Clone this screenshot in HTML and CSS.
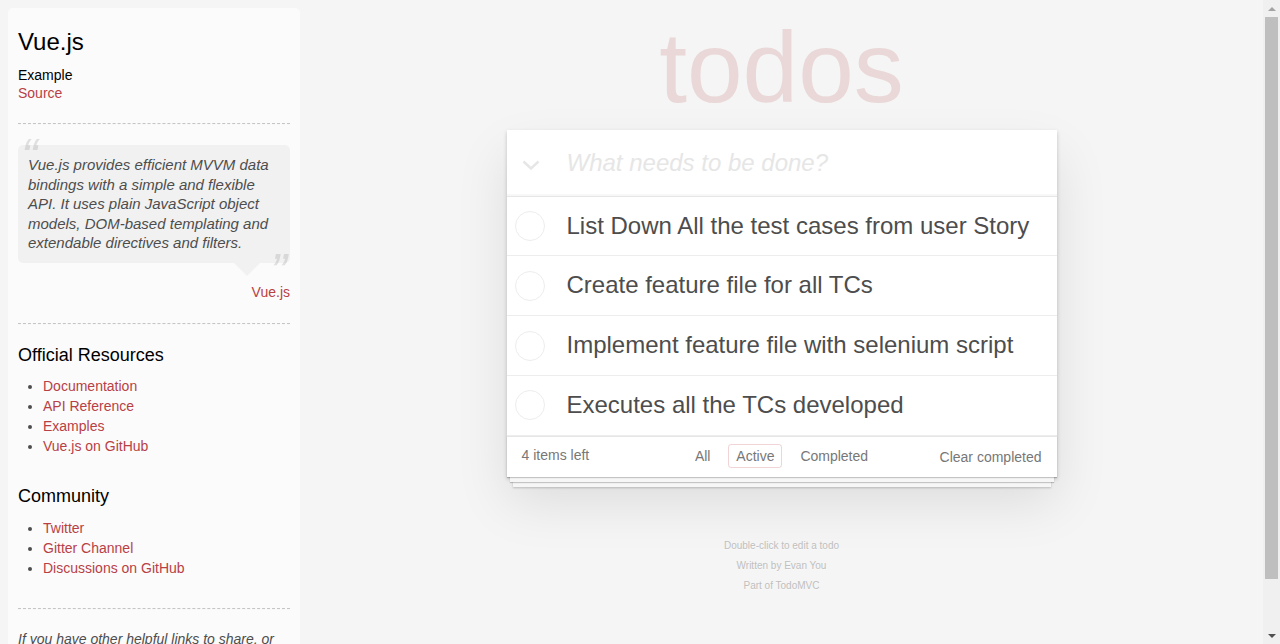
FILE: index.html
```html
<!DOCTYPE html>
<html lang="en">
<head>
<meta charset="utf-8">
<title>Vue.js • TodoMVC</title>
<link rel="stylesheet" href="styles.css">
</head>
<body>
<div class="page">
  <aside class="learn">
    <header class="learn-head">
      <h3>Vue.js</h3>
      <h5>Example</h5>
      <a href="#">Source</a>
    </header>
    <hr>
    <blockquote class="quote">
      <p>Vue.js provides efficient MVVM data bindings with a simple and flexible API. It uses plain JavaScript object models, DOM-based templating and extendable directives and filters.</p>
      <footer class="quote-by"><a href="#">Vue.js</a></footer>
    </blockquote>
    <hr>
    <h4>Official Resources</h4>
    <ul>
      <li><a href="#">Documentation</a></li>
      <li><a href="#">API Reference</a></li>
      <li><a href="#">Examples</a></li>
      <li><a href="#">Vue.js on GitHub</a></li>
    </ul>
    <h4>Community</h4>
    <ul>
      <li><a href="#">Twitter</a></li>
      <li><a href="#">Gitter Channel</a></li>
      <li><a href="#">Discussions on GitHub</a></li>
    </ul>
    <footer class="learn-foot">
      <hr>
      <em>If you have other helpful links to share, or find any of the links above no longer work, please <a href="#">let us know</a>.</em>
    </footer>
  </aside>

  <main class="main-col">
    <h1 class="brand">todos</h1>
    <section class="todoapp">
      <header class="entry">
        <span class="toggle-all">
          <svg width="18" height="10" viewBox="0 0 18 10"><polyline points="1.5,1.5 9,8.5 16.5,1.5" fill="none" stroke="#e6e6e6" stroke-width="2.4"/></svg>
        </span>
        <input class="new-todo" placeholder="What needs to be done?">
      </header>
      <ul class="todo-list">
        <li class="todo"><span class="toggle"><span class="circle"></span></span><label>List Down All the test cases from user Story</label></li>
        <li class="todo"><span class="toggle"><span class="circle"></span></span><label>Create feature file for all TCs</label></li>
        <li class="todo"><span class="toggle"><span class="circle"></span></span><label>Implement feature file with selenium script</label></li>
        <li class="todo"><span class="toggle"><span class="circle"></span></span><label>Executes all the TCs developed</label></li>
      </ul>
      <footer class="app-footer">
        <span class="todo-count"><strong>4</strong> items left</span>
        <ul class="filters">
          <li><a href="#">All</a></li>
          <li><a href="#" class="selected">Active</a></li>
          <li><a href="#">Completed</a></li>
        </ul>
        <span class="clear-completed">Clear completed</span>
      </footer>
    </section>
    <footer class="info">
      <p>Double-click to edit a todo</p>
      <p>Written by <a href="#">Evan You</a></p>
      <p>Part of <a href="#">TodoMVC</a></p>
    </footer>
  </main>
</div>
<div class="scrollbar" aria-hidden="true">
  <div class="sb-btn"><span class="arrow-up"></span></div>
  <div class="sb-thumb"></div>
  <div class="sb-rest"></div>
  <div class="sb-btn"><span class="arrow-down"></span></div>
</div>
</body>
</html>
```

FILE: styles.css
```css
html {
  scrollbar-width: none;
}

html, body {
  margin: 0;
  padding: 0;
}

body {
  display: flex;
  align-items: flex-start;
  background: #f5f5f5;
  color: #4d4d4d;
  font-family: "Liberation Sans", Arial, Helvetica, sans-serif;
  font-size: 14px;
  line-height: 19.6px;
  font-weight: 400;
}

.page {
  flex: 1;
  min-width: 0;
  display: flex;
  align-items: flex-start;
}

/* ---------- window scrollbar ---------- */
.scrollbar {
  flex: none;
  width: 17px;
  height: 100vh;
  position: sticky;
  top: 0;
  display: flex;
  flex-direction: column;
  background: #f0f0f0;
}
.sb-btn {
  flex: none;
  height: 17px;
  display: flex;
  align-items: center;
  justify-content: center;
}
.arrow-up {
  width: 0;
  height: 0;
  border-left: 4px solid transparent;
  border-right: 4px solid transparent;
  border-bottom: 4px solid #a3a3a3;
}
.arrow-down {
  width: 0;
  height: 0;
  border-left: 4px solid transparent;
  border-right: 4px solid transparent;
  border-top: 4px solid #505050;
}
.sb-thumb {
  flex: none;
  height: 562px;
  margin: 0 2px;
  background: #bfbfbf;
}
.sb-rest {
  flex: 1;
}

/* ---------- sidebar ---------- */
.learn {
  flex: none;
  width: 272px;
  margin: 8px 0 0 8px;
  padding: 10px;
  border-radius: 5px;
  background: rgba(255, 255, 255, 0.6);
}

.learn a {
  color: #b83f45;
  text-decoration: none;
  font-weight: normal;
}

.learn h3,
.learn h4,
.learn h5 {
  margin: 10px 0;
  font-weight: 500;
  line-height: 1.2;
  color: #000;
}
.learn h3 { font-size: 24px; }
.learn h4 { font-size: 18px; }
.learn h5 { font-size: 14px; margin-bottom: 0; }

.learn hr {
  margin: 20px 0;
  height: 0;
  border: 0;
  border-top: 1px dashed #c5c5c5;
  border-bottom: 1px dashed #f7f7f7;
}

.learn ul {
  padding: 0;
  margin: 0 0 30px 25px;
}
.learn li {
  line-height: 20px;
}

.quote {
  position: relative;
  margin: 20px 0 60px 0;
  padding: 10px;
  background: rgba(0, 0, 0, 0.04);
  border-radius: 5px;
}
.quote::after {
  content: '';
  position: absolute;
  top: 100%;
  right: 30px;
  border: 13px solid transparent;
  border-top-color: rgba(0, 0, 0, 0.04);
}
.quote p {
  margin: 0;
  font-size: 15px;
  line-height: 1.3;
  font-style: italic;
}
.quote p::before {
  content: '\201C';
  font-size: 50px;
  opacity: 0.15;
  position: absolute;
  top: -20px;
  left: 3px;
}
.quote p::after {
  content: '\201D';
  font-size: 50px;
  opacity: 0.15;
  position: absolute;
  bottom: -42px;
  right: 3px;
}
.quote-by {
  position: absolute;
  bottom: -40px;
  right: 0;
}
.quote-by a {
  margin-left: 5px;
  vertical-align: middle;
}

.learn-foot em {
  font-style: italic;
}

/* ---------- main column ---------- */
.main-col {
  flex: 1;
  min-width: 0;
  display: flex;
  flex-direction: column;
  align-items: center;
}

.brand {
  margin: 17px 0 13px;
  width: 550px;
  height: 100px;
  font-size: 100px;
  line-height: 100px;
  font-weight: 100;
  text-align: center;
  color: rgba(175, 47, 47, 0.15);
}

.todoapp {
  width: 550px;
  background: #fff;
  box-shadow: 0 2px 4px 0 rgba(0, 0, 0, 0.2), 0 25px 50px 0 rgba(0, 0, 0, 0.1);
}

.entry {
  display: flex;
  align-items: center;
  box-shadow: inset 0 -2px 1px rgba(0, 0, 0, 0.03);
}

.toggle-all {
  flex: none;
  width: 45px;
  padding-left: 15px;
  display: flex;
  align-items: center;
  margin-top: 4px;
}
.toggle-all svg {
  display: block;
}

.new-todo {
  flex: 1;
  min-width: 0;
  margin: 0;
  padding: 16px 16px 16px 0;
  height: 33.6px;
  border: none;
  outline: none;
  background: transparent;
  font-family: inherit;
  font-size: 24px;
  line-height: 33.6px;
  color: inherit;
}
.new-todo::placeholder {
  font-style: italic;
  font-weight: 300;
  color: #e6e6e6;
}

.todo-list {
  margin: 0;
  padding: 0;
  list-style: none;
  border-top: 1px solid #e6e6e6;
}

.todo {
  display: flex;
  align-items: center;
  font-size: 24px;
  border-bottom: 1px solid #ededed;
}

.toggle {
  flex: none;
  width: 40px;
  height: 40px;
  margin-left: 3px;
  display: flex;
  align-items: center;
  justify-content: center;
}
.circle {
  width: 28px;
  height: 28px;
  border: 1px solid #ededed;
  border-radius: 50%;
}

.todo label {
  flex: 1;
  display: block;
  padding: 15px 15px 15px 17px;
  line-height: 1.2;
  word-break: break-all;
}

.app-footer {
  display: grid;
  grid-template-columns: 1fr auto 1fr;
  align-items: center;
  height: 20px;
  padding: 10px 15px;
  color: #777;
  border-top: 1px solid #e6e6e6;
  box-shadow: 0 1px 1px rgba(0, 0, 0, 0.2),
    0 8px 0 -3px #f6f6f6,
    0 9px 1px -3px rgba(0, 0, 0, 0.2),
    0 16px 0 -6px #f6f6f6,
    0 17px 2px -6px rgba(0, 0, 0, 0.2);
}

.todo-count {
  position: relative;
  top: -1px;
}
.todo-count strong {
  font-weight: 400;
}

.filters {
  margin: 0;
  padding: 0;
  list-style: none;
  white-space: nowrap;
}
.filters li {
  display: inline;
}
.filters a {
  color: inherit;
  margin: 3px;
  padding: 3px 7px;
  text-decoration: none;
  border: 1px solid transparent;
  border-radius: 3px;
}
.filters a.selected {
  border-color: rgba(175, 47, 47, 0.2);
}

.clear-completed {
  justify-self: end;
  line-height: 20px;
}

.info {
  margin-top: 64px;
  display: flex;
  flex-direction: column;
  gap: 10px;
  font-size: 10px;
  color: #bfbfbf;
  text-shadow: 0 1px 0 rgba(255, 255, 255, 0.5);
  text-align: center;
}
.info p {
  margin: 0;
  line-height: 1;
}
.info a {
  color: inherit;
  text-decoration: none;
}
```
